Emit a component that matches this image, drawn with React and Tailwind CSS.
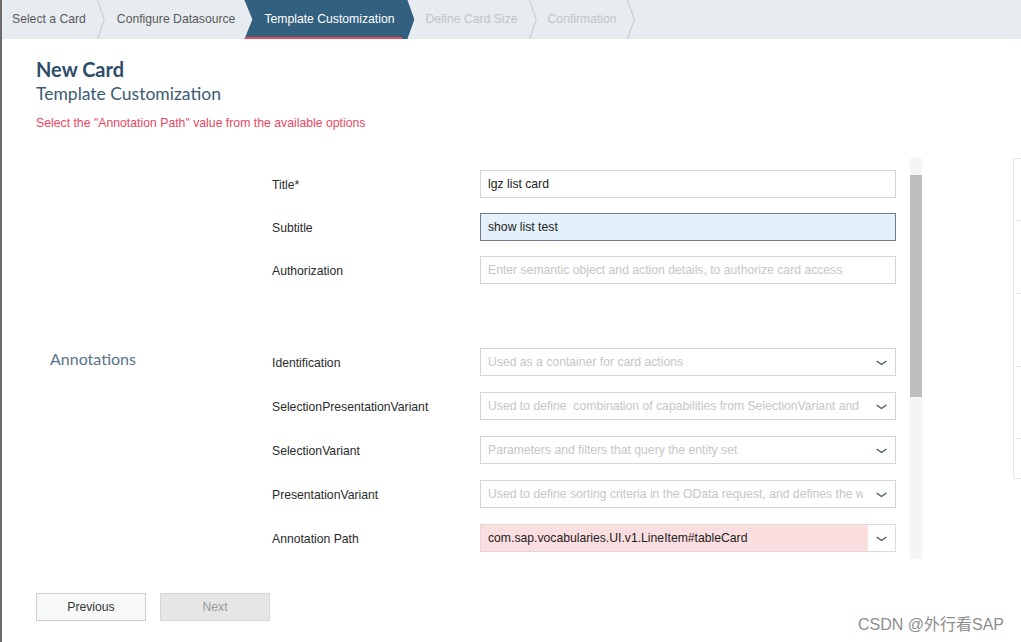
import React from "react";

const Chev = () => (
  <svg width="8" height="39" viewBox="0 0 8 39" className="shrink-0">
    <path d="M0.5 0 L7.3 19.5 L0.5 39" fill="none" stroke="#c3c7cb" strokeWidth="1" />
  </svg>
);

const Arrow = () => (
  <svg width="11" height="6" viewBox="0 0 11 6">
    <path d="M1 1.3 L5.5 4.5 L10 1.3" fill="none" stroke="#4a5560" strokeWidth="1.3" strokeLinecap="round" strokeLinejoin="round" />
  </svg>
);

const Label = ({ children }) => (
  <div className="text-[12.2px] text-[#2b2b2b] leading-[16px] pt-[1px]">{children}</div>
);

const TextInput = ({ value, placeholder, active }) => (
  <div
    className={
      active
        ? "h-[28px] border border-[#6f7d87] bg-[#e4f1fa] flex items-center pl-[7px] pt-[1px] text-[12.2px] text-[#222]"
        : "h-[28px] border border-[#d6d6d6] bg-white flex items-center pl-[7px] pt-[1px] text-[12.2px] text-[#222]"
    }
  >
    {value ? <span>{value}</span> : <span className="text-[#c6c6c6] whitespace-pre">{placeholder}</span>}
  </div>
);

const Select = ({ value, placeholder, error }) => (
  <div
    className={
      error
        ? "h-[28px] border border-[#e6d6d6] flex text-[12.2px] text-[#222]"
        : "h-[28px] border border-[#d6d6d6] flex text-[12.2px] text-[#222]"
    }
  >
    <div
      className={
        error
          ? "flex-1 min-w-0 bg-[#fbdedf] flex items-center pl-[7px] pt-[1px] overflow-hidden whitespace-pre"
          : "flex-1 min-w-0 bg-white flex items-center pl-[7px] pr-[5px] pt-[1px] overflow-hidden whitespace-pre"
      }
    >
      {value ? (
        <span>{value}</span>
      ) : (
        <span className="block overflow-hidden text-[#c6c6c6]">{placeholder}</span>
      )}
    </div>
    <div className="w-[27px] shrink-0 bg-white flex items-center justify-center pt-[1px]">
      <Arrow />
    </div>
  </div>
);

const Row = ({ section, label, children, className }) => (
  <div className={"grid grid-cols-[222px_208px_416px] items-center pl-[48px] " + (className || "")}>
    <div className="text-[16px] leading-[20px] pb-[6px] text-[#5a7489] font-['Lato',sans-serif]">{section}</div>
    <Label>{label}</Label>
    {children}
  </div>
);

export default function App() {
  return (
    <div className="relative w-[1021px] h-[642px] overflow-hidden flex bg-white font-['Liberation_Sans',Arial,sans-serif]">
      <div className="w-[2px] shrink-0 bg-[#6b6b6b]" />
      <div className="flex-1 flex flex-col min-w-0">
        {/* Breadcrumb */}
        <div className="h-[39px] shrink-0 bg-[#e7ecf0] flex items-stretch text-[12.2px]">
          <div className="pl-[10px] pr-[11px] flex items-center text-[#5a5a5a] whitespace-nowrap">Select a Card</div>
          <Chev />
          <div className="pl-[12px] pr-[9px] flex items-center text-[#5a5a5a] whitespace-nowrap">Configure Datasource</div>
          <div className="relative w-[170px] shrink-0 bg-[#33607f] flex items-center pl-[20px] text-white whitespace-nowrap [clip-path:polygon(0_0,163px_0,170px_50%,163px_100%,0_100%,8px_50%)]">
            Template Customization
            <div className="absolute left-[1px] bottom-0 w-[157px] h-[2px] bg-[#f04a5e]" />
          </div>
          <div className="pl-[11px] pr-[11px] flex items-center text-[#c0c4c8] whitespace-nowrap">Define Card Size</div>
          <Chev />
          <div className="pl-[11px] pr-[10px] flex items-center text-[#c0c4c8] whitespace-nowrap">Confirmation</div>
          <Chev />
        </div>

        {/* Header */}
        <div className="pl-[34px] pt-[18px] font-['Lato',sans-serif]">
          <div className="text-[20px] leading-[25px] font-bold text-[#2e4d68]">New Card</div>
          <div className="text-[17.5px] leading-[24px] text-[#3b5a74]">Template Customization</div>
        </div>
        <div className="pl-[34px] mt-[9px] text-[12.25px] leading-[16px] text-[#ea4862]">
          Select the "Annotation Path" value from the available options
        </div>

        {/* Form area */}
        <div className="mt-[27px] flex">
          <div className="flex w-[920px] h-[401px] shrink-0">
            <div className="flex-1 flex flex-col pt-[12px]">
              <Row label="Title*">
                <TextInput value="lgz list card" />
              </Row>
              <Row label="Subtitle" className="mt-[15px]">
                <TextInput value="show list test" active />
              </Row>
              <Row label="Authorization" className="mt-[15px]">
                <TextInput placeholder="Enter semantic object and action details, to authorize card access" />
              </Row>
              <Row section="Annotations" label="Identification" className="mt-[64px]">
                <Select placeholder="Used as a container for card actions" />
              </Row>
              <Row label="SelectionPresentationVariant" className="mt-[16px]">
                <Select placeholder="Used to define  combination of capabilities from SelectionVariant and PresentationVariant" />
              </Row>
              <Row label="SelectionVariant" className="mt-[16px]">
                <Select placeholder="Parameters and filters that query the entity set" />
              </Row>
              <Row label="PresentationVariant" className="mt-[16px]">
                <Select placeholder="Used to define sorting criteria in the OData request, and defines the way data is visualized" />
              </Row>
              <Row label="Annotation Path" className="mt-[16px]">
                <Select value="com.sap.vocabularies.UI.v1.LineItem#tableCard" error />
              </Row>
            </div>
            <div className="w-[12px] ml-[14px] bg-[#f5f5f5] pt-[17px] shrink-0">
              <div className="h-[222px] bg-[#bdbdbd]" />
            </div>
          </div>

          {/* Right preview edge */}
          <div className="ml-[91px] w-[40px] h-[321px] shrink-0 border border-[#e6e6e6] flex flex-col">
            <div className="h-[62px] ml-[2px] border-b border-[#e6e6e6]" />
            <div className="h-[73px] ml-[2px] border-b border-[#e6e6e6]" />
            <div className="h-[73px] ml-[2px] border-b border-[#e6e6e6]" />
            <div className="h-[72px] ml-[2px] border-b border-[#e6e6e6]" />
            <div className="flex-1" />
          </div>
        </div>

        {/* Buttons */}
        <div className="pl-[34px] mt-[34px] flex gap-[14px] text-[12.2px]">
          <button className="w-[110px] h-[28px] pt-[1px] border border-[#cfcfcf] bg-[#f7f8f8] text-[#333]">Previous</button>
          <button className="w-[110px] h-[28px] pt-[1px] border border-[#d6d6d6] bg-[#e6e6e6] text-[#9a9a9a]">Next</button>
        </div>
      </div>

      <div className="absolute left-[858px] top-[615px] text-[16px] leading-[20px] text-[#8e8e8e] whitespace-nowrap font-['Liberation_Sans','Noto_Sans_CJK_SC',sans-serif]">
        CSDN @外行看SAP
      </div>
    </div>
  );
}
